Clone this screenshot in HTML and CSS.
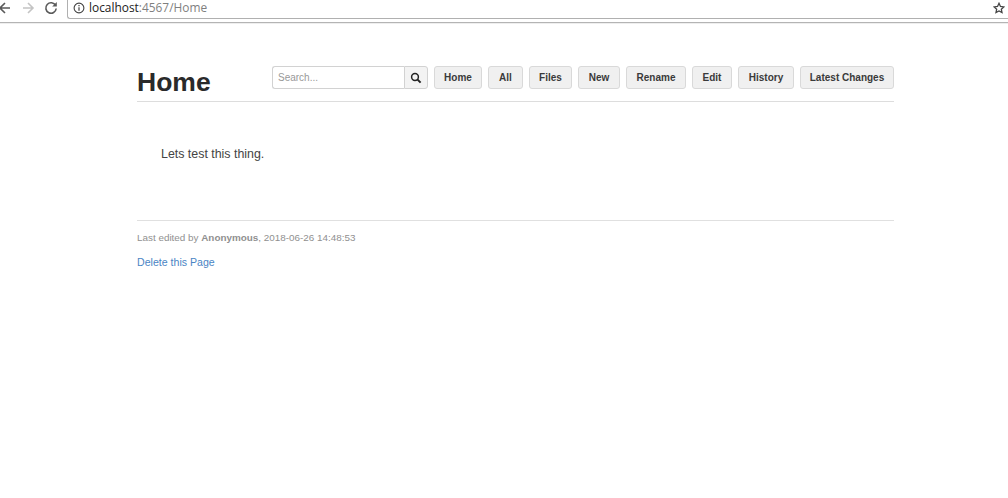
FILE: index.html
```html
<!DOCTYPE html>
<html lang="en">
<head>
<meta charset="utf-8">
<title>Home</title>
<link rel="stylesheet" href="styles.css">
</head>
<body>
<header class="chrome">
  <div class="nav-icons">
    <svg class="ico" width="14" height="14" viewBox="0 0 14 14"><path d="M12 7H2M7 2L2 7l5 5" fill="none" stroke="#5a5a5a" stroke-width="1.6"/></svg>
    <svg class="ico" width="14" height="14" viewBox="0 0 14 14"><path d="M2 7h10M7 2l5 5-5 5" fill="none" stroke="#c4c4c4" stroke-width="1.6"/></svg>
    <svg class="ico" width="14" height="14" viewBox="0 0 14 14"><path d="M11.6 4.5A5.2 5.2 0 1 0 12.2 7.5" fill="none" stroke="#5a5a5a" stroke-width="1.6"/><path d="M12.8 1v4.6H8.2z" fill="#5a5a5a"/></svg>
  </div>
  <div class="omnibox">
    <svg class="info" width="12" height="12" viewBox="0 0 13 13"><circle cx="6.5" cy="6.5" r="5.3" fill="none" stroke="#444" stroke-width="1.2"/><path d="M6.5 5.6v4M6.5 3.2v1.3" stroke="#444" stroke-width="1.3"/></svg>
    <span class="url"><span class="host">localhost</span>:4567/Home</span>
    <svg class="star" width="12" height="12" viewBox="0 0 14 14"><path d="M7 1.5l1.7 3.7 4 .5-3 2.7.8 4L7 10.5l-3.5 1.9.8-4-3-2.7 4-.5z" fill="none" stroke="#444" stroke-width="1.5"/></svg>
  </div>
</header>
<main class="page">
  <div class="head">
    <h1>Home</h1>
    <nav class="toolbar">
      <form class="search">
        <input class="search-input" type="text" placeholder="Search...">
        <button class="search-btn" type="button"><svg width="12" height="12" viewBox="0 0 12 12"><circle cx="5" cy="5" r="3.4" fill="none" stroke="#222" stroke-width="1.5"/><path d="M7.6 7.6l3 3" stroke="#222" stroke-width="2"/></svg></button>
      </form>
      <a class="btn">Home</a>
      <a class="btn">All</a>
      <a class="btn">Files</a>
      <a class="btn">New</a>
      <a class="btn">Rename</a>
      <a class="btn">Edit</a>
      <a class="btn">History</a>
      <a class="btn">Latest Changes</a>
    </nav>
  </div>
  <article class="content"><p>Lets test this thing.</p></article>
  <footer class="foot">
    <p class="edited">Last edited by <b>Anonymous</b>, 2018-06-26 14:48:53</p>
    <a class="del" href="#">Delete this Page</a>
  </footer>
</main>
</body>
</html>
```
FILE: styles.css
```css
* { box-sizing: border-box; }
html, body { margin: 0; height: 498px; overflow: hidden; background: #fff; }
body { font-family: "Liberation Sans", Arial, sans-serif; color: #333; }
.chrome { height: 23px; display: flex; align-items: flex-start; border-bottom: 1px solid #b4b4b4; box-shadow: 0 1px 0 #eee; }
.nav-icons { display: flex; gap: 9px; width: 69px; margin-left: -2px; height: 15px; align-items: center; flex: none; }
.ico { flex: none; }
.omnibox { flex: 1; height: 19px; display: flex; align-items: flex-start; border: 1px solid #b0b0b0; border-top: 0; border-right: 0; border-radius: 0 0 0 3px; padding-left: 5px; padding-right: 3px; }
.url { font-family: "Open Sans", "Liberation Sans", sans-serif; font-size: 11.9px; color: #7f7f7f; margin-left: 4px; line-height: 15px; }
.host { color: #222; }
.info { flex: none; margin-top: 2px; }
.star { margin-left: auto; margin-top: 2px; }
.page { width: 757px; margin-left: 137px; }
.head { display: flex; justify-content: space-between; height: 79px; padding-top: 43px; border-bottom: 1px solid #ddd; }
h1 { margin: 0; font-size: 26.5px; line-height: 32px; font-weight: 700; color: #2a2a2a; }
.toolbar { display: grid; grid-template-columns: 156px 48px 35px 43px 42px 60px 40px 56px 94px; gap: 6px; height: 23px; }
.search { display: flex; margin: 0; }
.search-input { width: 132px; height: 23px; padding: 0 5px; border: 1px solid #d2d2d2; border-right: 0; border-radius: 3px 0 0 3px; font: 10px "Liberation Sans", Arial, sans-serif; outline: 0; }
.search-input::placeholder { color: #999; opacity: 1; }
.search-btn { width: 24px; height: 23px; padding: 0; display: flex; align-items: center; justify-content: center; background: #f3f3f3; border: 1px solid #d2d2d2; border-radius: 0 3px 3px 0; }
.btn { height: 23px; padding-bottom: 1px; display: flex; align-items: center; justify-content: center; font-size: 10px; font-weight: 700; color: #3a3a3a; background: #f0f0f0; border: 1px solid #d9d9d9; border-radius: 3px; }
.content { height: 119px; padding: 44px 0 0 24px; border-bottom: 1px solid #e0e0e0; }
.content p { margin: 0; font-size: 12.4px; line-height: 16px; color: #444; }
.foot { padding-top: 10px; }
.edited { margin: 0 0 11px; font-size: 9.9px; line-height: 13px; color: #909090; }
.del { font-size: 10.6px; line-height: 14px; color: #4a84c4; text-decoration: none; display: block; }
```
